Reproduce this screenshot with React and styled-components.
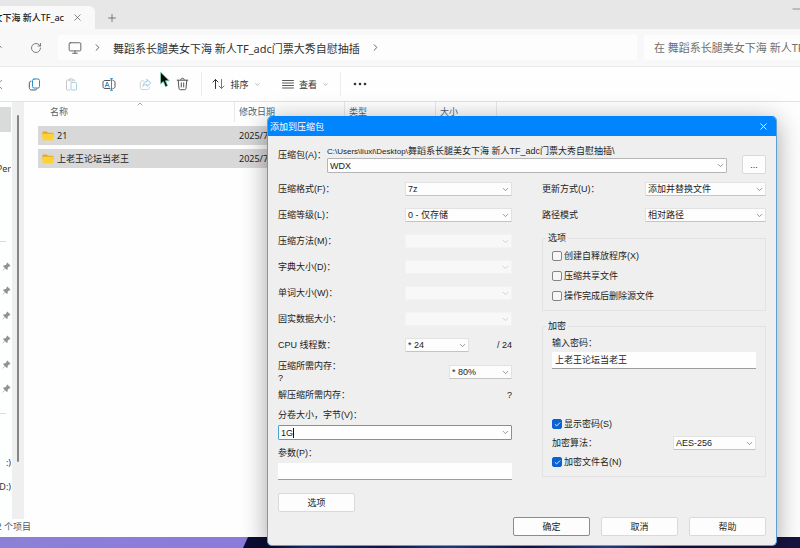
import React from 'react';
import styled, { createGlobalStyle } from 'styled-components';
import { X, Plus, Minus, ArrowUp, RotateCw, Monitor, ChevronRight, ChevronDown, ChevronUp, Scissors, Check } from 'lucide-react';

const GlobalStyle = createGlobalStyle`
  * {
    box-sizing: border-box;
  }
  body {
    margin: 0;
    overflow: hidden;
    font-family: 'Noto Sans', 'Noto Sans CJK SC', sans-serif;
    font-size: 9px;
    color: #222;
  }
  button, input, select {
    font-family: inherit;
    font-size: inherit;
    color: inherit;
    margin: 0;
  }
  svg {
    display: block;
    flex-shrink: 0;
  }
`;

const Desktop = styled.div`
  position: relative;
  min-height: 100vh;
  display: flex;
  flex-direction: column;
  background: #10123c;
`;

const Explorer = styled.div`
  flex: 1;
  display: flex;
  flex-direction: column;
  background: #fefefe;
`;

const Wallpaper = styled.div`
  height: 11px;
  background: linear-gradient(90deg, #0b0d33 0 34%, #123a8c 38%, #0e1c5c 48%, #1b4da6 56%, #0d1a58 66%, #2350a8 76%, #14154a 84%, #17143f);
`;

const Petal = styled.div`
  width: 31%;
  height: 100%;
  background: linear-gradient(90deg, #8c80d6, #8b7bdc);
  clip-path: polygon(0 0, 100% 0, calc(100% - 5px) 100%, 0 100%);
`;

const Clip = styled.div`
  display: flex;
  flex-shrink: 0;
  justify-content: flex-end;
  overflow: hidden;
  white-space: nowrap;
  width: ${props => props.$width}px;
`;

const TabBar = styled.div`
  display: flex;
  align-items: flex-end;
  height: 29px;
  background: #e7e7e7;
`;

const Tab = styled.div`
  display: flex;
  align-items: center;
  gap: 8px;
  width: 95px;
  height: 23px;
  background: #f9f9fa;
  border-radius: 0 6px 0 0;
  font-weight: 500;
`;

const BareButton = styled.button`
  display: flex;
  align-items: center;
  justify-content: center;
  gap: 5px;
  width: ${props => props.$width}px;
  height: 23px;
  padding: 0;
  border: 0;
  background: none;
  color: ${props => props.$color || '#555'};
`;

const WindowControls = styled.div`
  align-self: flex-start;
  margin-left: auto;
  width: 10px;
  height: 18px;
  display: flex;
  align-items: center;
  overflow: hidden;
`;

const AddressBar = styled.div`
  display: flex;
  align-items: center;
  height: 38px;
  background: #f8f8f9;
  border-bottom: 1px solid #e9e9ea;
  color: #555;
`;

const Nav = styled.div`
  display: flex;
  align-items: center;
  gap: 10px;
`;

const Crumbs = styled.div`
  flex: 1;
  display: flex;
  align-items: center;
  height: 25px;
  margin-right: 7px;
  padding-left: 10px;
  gap: 10px;
  background: #fdfdfd;
  border-radius: 3px;
`;

const Crumb = styled.a`
  font-size: 11px;
  color: #333;
  text-decoration: none;
  white-space: nowrap;
`;

const Search = styled.input`
  width: 156px;
  height: 25px;
  padding: 0 0 0 10px;
  border: 0;
  border-radius: 3px 0 0 3px;
  background: #fdfdfd;
  font-size: 11px;
  &::placeholder {
    color: #707070;
    opacity: 1;
  }
`;

const Toolbar = styled.div`
  display: flex;
  align-items: center;
  height: 35px;
  border-bottom: 1px solid #e2e2e2;
`;

const Tools = styled.div`
  display: flex;
  padding-left: 12px;
`;

const Divider = styled.div`
  width: 1px;
  height: 24px;
  background: #ececec;
`;

const Body = styled.div`
  flex: 1;
  display: flex;
`;

const Sidebar = styled.div`
  width: 12px;
  padding: 5px 0 20px;
  display: grid;
  grid-auto-rows: 1fr;
  background: #fdfefe;
`;

const SideItem = styled.div`
  display: flex;
  align-items: center;
  justify-content: flex-end;
  overflow: hidden;
  margin-right: 1px;
  color: #333;
  background: ${props => (props.$active ? '#d9dbdb' : 'none')};
`;

const SideRule = styled.hr`
  width: 6px;
  margin: auto auto auto 0;
  border: 0;
  border-top: 1px solid #dcdcdc;
`;

const Scroll = styled.div`
  display: flex;
  justify-content: center;
  width: 12px;
  padding: 13px 0 57px;
  background: #efefef;
`;

const Thumb = styled.div`
  width: 2px;
  border-radius: 1px;
  background: #858585;
`;

const Files = styled.table`
  align-self: flex-start;
  margin-left: 14px;
  width: 459px;
  table-layout: fixed;
  border-spacing: 0;
`;

const Head = styled.th`
  position: relative;
  width: ${props => props.$width}px;
  height: 20px;
  padding: 0 0 0 ${props => props.$indent || 4}px;
  border-right: 1px solid #e8e8e8;
  text-align: left;
  font-weight: 400;
  color: #4f6478;
  line-height: 12px;
`;

const SortMark = styled.span`
  position: absolute;
  top: -2px;
  left: 50%;
`;

const Cell = styled.td`
  height: 23px;
  padding: 0 0 0 4px;
  border-top: 4px solid transparent;
  background: #d8d8d8;
  background-clip: padding-box;
  line-height: 12px;
`;

const FileName = styled.span`
  display: flex;
  align-items: center;
  gap: 3px;
`;

const Status = styled.div`
  height: 18px;
  color: #48606f;
  line-height: 16px;
`;

const Pointer = styled.div`
  position: absolute;
  left: 159px;
  top: 71px;
`;

const Dialog = styled.form`
  position: absolute;
  top: 116px;
  left: 267px;
  right: 23px;
  border: 1px solid #5d9fd0;
  border-top-color: #0085ff;
  border-radius: 5px;
  background: #efefef;
  box-shadow: 0 5px 26px rgba(0, 0, 0, 0.36);
  font-family: 'Liberation Sans', 'Noto Sans CJK SC', sans-serif;
  line-height: 12px;
  color: #1c1c1c;
  overflow: hidden;
`;

const TitleBar = styled.div`
  display: flex;
  align-items: center;
  justify-content: space-between;
  height: 19px;
  padding-left: 2px;
  background: #0085ff;
  color: #fff;
`;

const Content = styled.div`
  padding: 9px 10px;
`;

const Archive = styled.div`
  display: grid;
  grid-template-columns: 49px 1fr 24px;
  margin-bottom: 2px;
`;

const ArchiveLabel = styled.label`
  line-height: 20px;
`;

const ArchiveField = styled.div`
  margin-right: 15px;
`;

const Path = styled.div`
  white-space: nowrap;
`;

const Drive = styled.span`
  font-size: 8px;
`;

const Browse = styled.div`
  display: flex;
  align-items: flex-end;
  height: 29px;
`;

const Columns = styled.div`
  display: grid;
  grid-template-columns: 234fr 224fr;
  gap: 30px;
`;

const Row = styled.div`
  display: flex;
  align-items: center;
  justify-content: space-between;
  height: ${props => props.$height || 26}px;
`;

const ThreadRow = styled(Row)`
  display: grid;
  grid-template-columns: 1fr 64px 43px;
  text-align: right;
  label {
    text-align: left;
  }
`;

const Block = styled.div`
  display: grid;
  gap: 4px;
  padding: 5px 0 2px;
`;

const Picker = styled.div`
  position: relative;
  display: grid;
  align-items: center;
  width: ${props => (props.$width ? props.$width + 'px' : '100%')};
  > * {
    grid-area: 1 / 1;
  }
  svg {
    justify-self: end;
    margin-right: 2px;
    pointer-events: none;
    color: #777;
  }
  select:disabled + svg {
    color: #c4c4c4;
  }
`;

const Select = styled.select`
  appearance: none;
  width: 100%;
  height: 14px;
  padding: 0 0 0 2px;
  border: 1px solid #e2e2e2;
  border-bottom-color: #c4c4c4;
  border-radius: 1px;
  background: #fdfdfd;
  &:disabled {
    background: #f8f8f8;
    border-color: #f3f3f3;
    opacity: 1;
  }
`;

const ComboInput = styled.input`
  width: 100%;
  height: 15px;
  padding: 0 0 0 2px;
  border: 1px solid ${props => (props.$active ? '#4ba3d0' : '#b5b5b5')};
  border-radius: 1px;
  background: #fefefe;
`;

const Caret = styled.span`
  position: absolute;
  left: 15px;
  width: 1px;
  height: 10px;
  background: #111;
`;

const TextInput = styled.input`
  width: 100%;
  height: 17px;
  padding: 0 0 2px 3px;
  border: 0;
  border-bottom: 1px solid #9c9c9c;
  background: #fefefe;
`;

const Button = styled.button`
  width: ${props => props.$width || 77}px;
  height: 19px;
  padding: 0;
  border: 1px solid ${props => (props.$primary ? '#4a9fd6' : '#dadada')};
  border-radius: 2px;
  background: #fdfdfd;
  line-height: 12px;
`;

const Group = styled.fieldset`
  margin: ${props => props.$gap}px 0 0;
  padding: 2px 9px 4px;
  border: 1px solid #e3e3e3;
  min-width: 0;
`;

const Legend = styled.legend`
  margin-left: -6px;
  padding: 0 2px;
`;

const Tick = styled.label`
  display: flex;
  align-items: center;
  gap: 2px;
  height: 20px;
`;

const TickBox = styled.span`
  display: grid;
  place-items: center;
  > * {
    grid-area: 1 / 1;
  }
  input {
    appearance: none;
    width: 10px;
    height: 10px;
    border: 1px solid #858585;
    border-radius: 2px;
    background: #f6f6f6;
  }
  input:checked {
    border-color: #0b63d3;
    background: #0b63d3;
  }
  svg {
    pointer-events: none;
    color: #fff;
    visibility: hidden;
  }
  input:checked + svg {
    visibility: visible;
  }
`;

const PasswordBlock = styled.div`
  padding-bottom: 45px;
  label {
    display: block;
    line-height: 18px;
  }
  input {
    display: block;
  }
`;

const OptionsLine = styled.div`
  margin-top: 11px;
`;

const Footer = styled.div`
  display: flex;
  justify-content: flex-end;
  gap: 11px;
  margin-top: 5px;
`;

const stroke = {
  fill: 'none',
  stroke: 'currentColor',
  strokeLinecap: 'round',
  strokeLinejoin: 'round',
};

const CopyIcon = () => (
  <svg width="13" height="13" viewBox="0 0 13 13" {...stroke}>
    <rect x="4.5" y="1" width="7" height="9" rx="1.5" stroke="#2b8fd0" />
    <path d="M3 3.2C1.8 3.3 1.3 4 1.3 5v4.5C1.3 11 2.2 12 3.7 12H7c1 0 1.7-.5 1.8-1.2" />
  </svg>
);

const PasteIcon = () => (
  <svg width="13" height="13" viewBox="0 0 13 13" {...stroke}>
    <path d="M4 2H2.5C1.9 2 1.5 2.4 1.5 3v8c0 .6.4 1 1 1H5M8 2h1.2c.5 0 .8.4.8.9" />
    <rect x="4" y="1" width="4" height="2" rx="1" />
    <rect x="6" y="4.5" width="5.5" height="7.5" rx="1" stroke="#a9cfe0" />
  </svg>
);

const RenameIcon = () => (
  <svg width="14" height="13" viewBox="0 0 14 13" {...stroke}>
    <path d="M8 2.5H3C1.8 2.5 1 3.3 1 4.5v4c0 1.2.8 2 2 2h5M11 2.5c1.2 0 2 .8 2 2v4c0 1.2-.8 2-2 2" />
    <path d="M3.2 9 5.2 4l2 5M3.9 7.5h2.6M9.5 1v11M8.3.8h2.4M8.3 12.2h2.4" stroke="#2b8fd0" />
  </svg>
);

const ShareIcon = () => (
  <svg width="13" height="13" viewBox="0 0 13 13" {...stroke}>
    <path d="M5 3H3C1.9 3 1.3 3.7 1.3 4.7v5.1c0 1 .7 1.7 1.7 1.7h5.5c1 0 1.7-.7 1.7-1.7V9" />
    <path d="M8 1.5 11.8 5 8 8.3V6.4C6 6.3 4.8 7 4 8.3 4.2 5.5 5.5 3.8 8 3.5z" stroke="#9ccbe0" />
  </svg>
);

const TrashIcon = () => (
  <svg width="13" height="14" viewBox="0 0 13 14" {...stroke}>
    <path d="M1.2 3.2h10.6M4.8 3C4.8 1.7 5.5 1.2 6.5 1.2S8.2 1.7 8.2 3M2.2 3.3 3 11.5c.1.8.6 1.2 1.3 1.2h4.4c.7 0 1.2-.4 1.3-1.2l.8-8.2M5.3 5.8v4.2M7.7 5.8v4.2" />
  </svg>
);

const SortIcon = () => (
  <svg width="13" height="12" viewBox="0 0 13 12" {...stroke}>
    <path d="M3.5 10.5v-9M1 4l2.5-2.5L6 4" />
    <path d="M9.5 1.5v9M7 8l2.5 2.5L12 8" stroke="#1f8fdc" />
  </svg>
);

const LinesIcon = () => (
  <svg width="12" height="12" viewBox="0 0 12 12" {...stroke}>
    <path d="M.5 2.5h11M.5 5h11M.5 7.5h11M.5 10h11" strokeWidth=".8" />
  </svg>
);

const DotsIcon = () => (
  <svg width="14" height="4" viewBox="0 0 14 4" fill="#333">
    <circle cx="2" cy="2" r="1.3" />
    <circle cx="7" cy="2" r="1.3" />
    <circle cx="12" cy="2" r="1.3" />
  </svg>
);

const FolderIcon = () => (
  <svg width="12" height="10" viewBox="0 0 12 10">
    <path d="M.5 1.5c0-.6.4-1 1-1h3L6 1.8h4.5c.6 0 1 .4 1 1V6H.5z" fill="#e9a51f" />
    <rect x=".5" y="2.8" width="11" height="6.7" rx=".8" fill="#fdd235" />
  </svg>
);

const PinIcon = () => (
  <svg width="9" height="9" viewBox="0 0 9 9">
    <path d="M5.3.5 8.5 3.7 7.5 4.5 6.9 4.4 5.7 5.8 5.6 7.5 4.9 8 3 6.2.8 8.5.5 8.2 2.7 6 1 4.1 1.6 3.5 3.3 3.3 4.7 2.1 4.5 1.4z" fill="#8b9296" />
  </svg>
);

const Arrow = () => <ChevronDown size={9} strokeWidth={2} />;

const Dropdown = ({ id, width, value, disabled }) => (
  <Picker $width={width}>
    <Select id={id} disabled={disabled}>
      <option>{value}</option>
    </Select>
    <Arrow />
  </Picker>
);

const TickRow = ({ children, checked }) => (
  <Tick>
    <TickBox>
      <input type="checkbox" defaultChecked={checked} />
      <Check size={7} strokeWidth={3} />
    </TickBox>
    {children}
  </Tick>
);

const FOLDER = '舞蹈系长腿美女下海 新人TF_adc门票大秀自慰抽插';

const formats = [
  { id: 'format', label: '压缩格式(F)：', value: '7z' },
  { id: 'level', label: '压缩等级(L)：', value: '0 - 仅存储' },
  { id: 'method', label: '压缩方法(M)：', disabled: true },
  { id: 'dict', label: '字典大小(D)：', disabled: true },
  { id: 'word', label: '单词大小(W)：', disabled: true },
  { id: 'solid', label: '固实数据大小：', disabled: true },
];

const files = ['21', '上老王论坛当老王'];

const ArchiveDialog = () => (
  <Dialog onSubmit={e => e.preventDefault()}>
    <TitleBar>
      添加到压缩包
      <BareButton type="button" $width={26} $color="#fff"><X size={11} strokeWidth={2} /></BareButton>
    </TitleBar>
    <Content>
      <Archive>
        <ArchiveLabel htmlFor="archive">压缩包(A)：</ArchiveLabel>
        <ArchiveField>
          <Path><Drive>C:\Users\liuxi\Desktop\</Drive>{FOLDER}\</Path>
          <Picker>
            <ComboInput id="archive" defaultValue="WDX" />
            <Arrow />
          </Picker>
        </ArchiveField>
        <Browse>
          <Button type="button" $width={24}>...</Button>
        </Browse>
      </Archive>
      <Columns>
        <div>
          {formats.map(f => (
            <Row key={f.id}>
              <label htmlFor={f.id}>{f.label}</label>
              <Dropdown id={f.id} width={107} value={f.value} disabled={f.disabled} />
            </Row>
          ))}
          <ThreadRow>
            <label htmlFor="threads">CPU 线程数：</label>
            <Dropdown id="threads" width={64} value="* 24" />
            <span>/ 24</span>
          </ThreadRow>
          <Row $height={28}>
            <label htmlFor="memory">压缩所需内存：<br />?</label>
            <Dropdown id="memory" width={63} value="* 80%" />
          </Row>
          <Row $height={18}>
            <span>解压缩所需内存：</span>
            <span>?</span>
          </Row>
          <Block>
            <label htmlFor="volume">分卷大小，字节(V)：</label>
            <Picker>
              <ComboInput id="volume" defaultValue="1G" $active />
              <Arrow />
              <Caret />
            </Picker>
          </Block>
          <Block>
            <label htmlFor="params">参数(P)：</label>
            <TextInput id="params" />
          </Block>
          <OptionsLine>
            <Button type="button">选项</Button>
          </OptionsLine>
        </div>
        <div>
          <Row>
            <label htmlFor="update">更新方式(U)：</label>
            <Dropdown id="update" width={121} value="添加并替换文件" />
          </Row>
          <Row>
            <label htmlFor="paths">路径模式</label>
            <Dropdown id="paths" width={121} value="相对路径" />
          </Row>
          <Group $gap={4}>
            <Legend>选项</Legend>
            <TickRow>创建自释放程序(X)</TickRow>
            <TickRow>压缩共享文件</TickRow>
            <TickRow>操作完成后删除源文件</TickRow>
          </Group>
          <Group $gap={9}>
            <Legend>加密</Legend>
            <PasswordBlock>
              <label htmlFor="password">输入密码：</label>
              <TextInput id="password" defaultValue="上老王论坛当老王" />
            </PasswordBlock>
            <TickRow checked>显示密码(S)</TickRow>
            <Row $height={18}>
              <label htmlFor="cipher">加密算法：</label>
              <Dropdown id="cipher" width={83} value="AES-256" />
            </Row>
            <TickRow checked>加密文件名(N)</TickRow>
          </Group>
        </div>
      </Columns>
      <Footer>
        <Button type="submit" $primary>确定</Button>
        <Button type="button">取消</Button>
        <Button type="button">帮助</Button>
      </Footer>
    </Content>
  </Dialog>
);

const App = () => (
  <Desktop>
    <GlobalStyle />
    <Explorer>
      <TabBar>
        <Tab>
          <Clip $width={64}>女下海 新人TF_ac</Clip>
          <X size={11} strokeWidth={1.5} color="#555" />
        </Tab>
        <BareButton $width={34}><Plus size={12} strokeWidth={1.5} /></BareButton>
        <WindowControls><Minus size={14} strokeWidth={1} color="#555" /></WindowControls>
      </TabBar>
      <AddressBar>
        <Nav>
          <Clip $width={4}><ArrowUp size={13} strokeWidth={1.5} /></Clip>
          <BareButton $width={44}><RotateCw size={12} strokeWidth={1.5} /></BareButton>
        </Nav>
        <Crumbs>
          <Monitor size={14} strokeWidth={1.5} />
          <ChevronRight size={11} />
          <Crumb href="#">{FOLDER}</Crumb>
          <ChevronRight size={11} />
        </Crumbs>
        <Search aria-label="搜索" placeholder="在 舞蹈系长腿美女下海 新人TF_adc门票" />
      </AddressBar>
      <Toolbar>
        <Clip $width={4}><Scissors size={13} strokeWidth={1.5} color="#2b8fd0" /></Clip>
        <Tools>
          <BareButton $width={37}><CopyIcon /></BareButton>
          <BareButton $width={37} $color="#c4c8ca"><PasteIcon /></BareButton>
          <BareButton $width={37}><RenameIcon /></BareButton>
          <BareButton $width={37} $color="#cdd3d6"><ShareIcon /></BareButton>
          <BareButton $width={37}><TrashIcon /></BareButton>
        </Tools>
        <Divider />
        <BareButton $width={69} $color="#333"><SortIcon />排序<ChevronDown size={7} color="#888" /></BareButton>
        <BareButton $width={69} $color="#333"><LinesIcon />查看<ChevronDown size={7} color="#888" /></BareButton>
        <Divider />
        <BareButton $width={37}><DotsIcon /></BareButton>
      </Toolbar>
      <Body>
        <Sidebar>
          <SideItem $active />
          <SideItem />
          <SideItem>Per</SideItem>
          <SideItem />
          <SideItem />
          <SideRule />
          {[1, 2, 3, 4, 5, 6].map(n => (
            <SideItem key={n}><PinIcon /></SideItem>
          ))}
          <SideRule />
          <SideItem />
          <SideItem>:)</SideItem>
          <SideItem>D:)</SideItem>
        </Sidebar>
        <Scroll><Thumb /></Scroll>
        <Files>
          <thead>
            <tr>
              <Head $width={197} $indent={12}>
                名称
                <SortMark><ChevronUp size={8} color="#777" /></SortMark>
              </Head>
              <Head $width={110}>修改日期</Head>
              <Head $width={91}>类型</Head>
              <Head $width={61}>大小</Head>
            </tr>
          </thead>
          <tbody>
            {files.map(name => (
              <tr key={name}>
                <Cell><FileName><FolderIcon />{name}</FileName></Cell>
                <Cell>2025/7</Cell>
                <Cell />
                <Cell />
              </tr>
            ))}
          </tbody>
        </Files>
      </Body>
      <Status>
        <Clip $width={31}>2 个项目</Clip>
      </Status>
    </Explorer>
    <Wallpaper><Petal /></Wallpaper>
    <Pointer>
      <svg width="12" height="18" viewBox="0 0 12 18">
        <path d="M1.5 1v12l2.8-2.5 2.2 5.3 2.2-1-2.2-5h3.8z" fill="#050505" stroke="#7fe0b8" strokeWidth=".8" />
      </svg>
    </Pointer>
    <ArchiveDialog />
  </Desktop>
);

export default App;
